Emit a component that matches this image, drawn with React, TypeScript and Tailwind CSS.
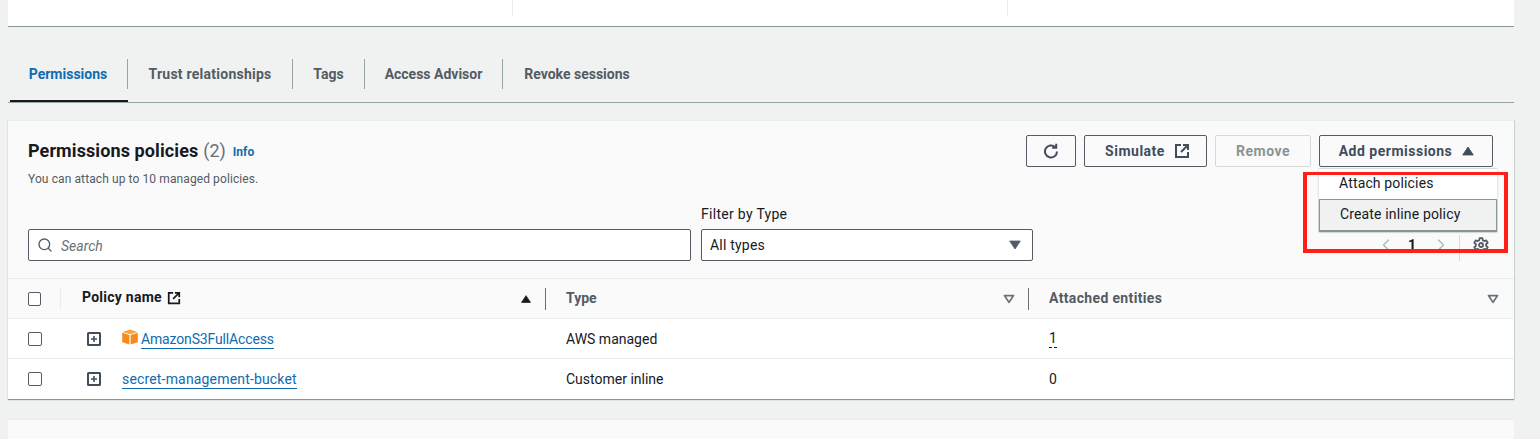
import { ChevronLeft, ChevronRight, Search } from "lucide-react";

const font = "font-['Roboto',sans-serif]";

function ExternalIcon({ className }: { className?: string }) {
  return (
    <svg viewBox="0 0 16 16" fill="none" stroke="currentColor" strokeWidth="2" className={className}>
      <path d="M7 2H2v12h12V9" />
      <path d="M9 2h5v5M14 2 7 9" />
    </svg>
  );
}

function RefreshIcon({ className }: { className?: string }) {
  return (
    <svg viewBox="0 0 16 16" fill="none" stroke="currentColor" strokeWidth="2" className={className}>
      <path d="M14 8.5a6 6 0 1 1-1.9-4.4" />
      <path d="M13.2 .8v4h-4" />
    </svg>
  );
}

function GearIcon({ className }: { className?: string }) {
  return (
    <svg viewBox="0 0 16 16" fill="none" stroke="currentColor" strokeWidth="1.8" strokeLinejoin="round" className={className}>
      <path d="M6.6 1.2h2.8l.4 2 1.5.9 2-.7 1.4 2.4-1.6 1.4v1.6l1.6 1.4-1.4 2.4-2-.7-1.5.9-.4 2H6.6l-.4-2-1.5-.9-2 .7-1.4-2.4 1.6-1.4V7.2L1.3 5.8l1.4-2.4 2 .7 1.5-.9Z" />
      <circle cx="8" cy="8" r="2" />
    </svg>
  );
}

function Triangle({ up, hollow, className }: { up?: boolean; hollow?: boolean; className?: string }) {
  const d = up ? "M8 3.5 14 12.5H2Z" : "M2 3.5H14L8 12.5Z";
  return (
    <svg viewBox="0 0 16 16" className={className}>
      <path
        d={d}
        fill={hollow ? "none" : "currentColor"}
        stroke="currentColor"
        strokeWidth={hollow ? 2.4 : 1}
        strokeLinejoin="round"
      />
    </svg>
  );
}

function Checkbox() {
  return <span className="block h-[14px] w-[14px] rounded-[2px] border border-[#545b64] bg-white" />;
}

function ExpandIcon() {
  return (
    <svg viewBox="0 0 14 14" fill="none" stroke="#414d5c" className="h-[14px] w-[14px]">
      <rect x="1" y="1" width="12" height="12" strokeWidth="2" rx="0.5" />
      <path d="M7 4v6M4 7h6" strokeWidth="1.6" />
    </svg>
  );
}

function Cube() {
  return (
    <svg viewBox="0 0 16 16" className="h-4 w-4 shrink-0">
      <path d="M8 .6 15.6 3 8 5.2.4 3Z" fill="#f9a23b" />
      <path d="M.2 3.7 7.4 6v9.6L.2 13.2Z" fill="#f58a1f" />
      <path d="M15.8 3.7 8.6 6v9.6l7.2-2.4Z" fill="#f58a1f" />
    </svg>
  );
}

function Button({ children, disabled, className }: { children: React.ReactNode; disabled?: boolean; className?: string }) {
  return (
    <div
      className={`flex h-8 items-center justify-center rounded-[2px] border text-[14px] font-bold tracking-[0.5px] ${
        disabled ? "border-[#d5dbdb] text-[#879596]" : "border-[#545b64] text-[#414d5c]"
      } ${className ?? ""}`}
    >
      {children}
    </div>
  );
}

export default function App() {
  return (
    <div className={`relative h-[439px] w-[1540px] overflow-hidden bg-[#f0f2f1] ${font}`}>
      {/* summary card, cut off by the top of the shot */}
      <div className="ml-2 flex h-[27px] w-[1506px] border-b border-[#879596] bg-white">
        <div className="h-4 w-[505px] border-r border-[#eaeded]" />
        <div className="h-4 w-[495px] border-r border-[#eaeded]" />
      </div>

      {/* tabs */}
      <div className="mx-2 mt-8 flex h-11 w-[1506px] items-start border-b border-[#95a5a6] text-[14px] font-bold text-[#545b64]">
        <div className="ml-[2px] flex h-[43px] w-[118px] items-start border-b-2 border-[#16191f]">
          <span className="flex h-[30px] w-[118px] items-center justify-center border-r border-[#95a5a6] pr-[1px] text-[#0f6cb1]">
            Permissions
          </span>
        </div>
        <div className="flex h-[30px] w-[165px] items-center justify-center border-r border-[#95a5a6] tracking-[0.25px]">Trust relationships</div>
        <div className="flex h-[30px] w-[72px] items-center justify-center border-r border-[#95a5a6]">Tags</div>
        <div className="flex h-[30px] w-[138px] items-center justify-center border-r border-[#95a5a6]">Access Advisor</div>
        <div className="flex h-[30px] w-[148px] items-center justify-center">Revoke sessions</div>
      </div>

      {/* permissions policies panel */}
      <div className="ml-2 mt-[17px] w-[1506px] border-t border-[#eaeded] bg-[#fafafa] shadow-[0_1px_1px_#879596,1px_0_0_#d5dbdb]">
        <div className="flex h-[158px] flex-col border-b border-[#eaeded] pl-5 pr-[21px] pt-[14px]">
          <div className="flex items-start justify-between">
            <div>
              <div className="flex h-[30px] items-center">
                <span className="text-[18px] font-bold tracking-[0.1px] text-[#16191f]">Permissions policies</span>
                <span className="ml-[5px] text-[18px] text-[#687078]">(2)</span>
                <span className="ml-[7px] translate-y-[2px] text-[12px] font-bold text-[#0f6cb1]">Info</span>
              </div>
              <div className="mt-[5px] text-[12px] tracking-[0.1px] text-[#545b64]">You can attach up to 10 managed policies.</div>
            </div>
            <div className="flex gap-2">
              <Button className="w-[50px]">
                <RefreshIcon className="h-4 w-4" />
              </Button>
              <Button className="w-[123px] gap-[9px] pl-1">
                Simulate
                <ExternalIcon className="h-4 w-4" />
              </Button>
              <Button disabled className="w-[96px]">
                Remove
              </Button>
              <Button className="w-[174px] gap-[9px] pl-[2px]">
                Add permissions
                <Triangle up className="h-[14px] w-[14px]" />
              </Button>
            </div>
          </div>

          <div className="mt-[16px] flex items-end">
            <div className="flex h-8 w-[663px] items-center rounded-[2px] border border-[#545b64] bg-white px-[8px]">
              <Search size={16} strokeWidth={2} className="text-[#545b64]" />
              <span className="ml-[8px] translate-y-[1px] text-[14px] italic text-[#687078]">Search</span>
            </div>
            <div className="ml-[10px] w-[332px]">
              <div className="mb-[4px] text-[14px] tracking-[0.3px] text-[#16191f]">Filter by Type</div>
              <div className="flex h-8 items-center justify-between rounded-[2px] border border-[#545b64] bg-white pl-[8px] pr-[10px] text-[14px] tracking-[0.2px] text-[#16191f]">
                All types
                <Triangle className="h-[14px] w-[14px] text-[#545b64]" />
              </div>
            </div>
            <div className="ml-auto flex h-[26px] w-[134px] items-start text-[#aab7b8]">
              <ChevronLeft size={20} className="ml-[17px]" strokeWidth={1.6} />
              <span className="ml-[9px] w-[14px] text-center text-[14px] font-bold leading-5 text-[#16191f]">1</span>
              <ChevronRight size={20} className="ml-[12px]" strokeWidth={1.6} />
              <div className="ml-[8px] h-[26px] w-px bg-[#d5dbdb]" />
              <GearIcon className="ml-[13px] mt-[2px] h-4 w-4 text-[#545b64]" />
            </div>
          </div>
        </div>

        {/* table */}
        <div className="grid grid-cols-[53px_485px_483px_1fr] text-[14px]">
          <div className="flex h-[40px] items-center border-b border-[#eaeded] pl-5">
            <Checkbox />
            <div className="ml-[19px] h-[22px] w-px bg-[#eaeded]" />
          </div>
          <div className="flex h-[40px] items-center border-b border-[#eaeded] pl-[21px] font-bold text-[#16191f]">
            <span className="-translate-y-[1px] tracking-[0.25px]">Policy name</span>
            <ExternalIcon className="ml-[5px] h-[14px] w-[14px] -translate-y-[1px]" />
            <Triangle up className="ml-auto mr-[13px] h-[12px] w-[12px]" />
            <div className="h-[22px] w-px bg-[#687078]" />
          </div>
          <div className="flex h-[40px] items-center border-b border-[#eaeded] pl-5 font-bold text-[#545b64]">
            Type
            <Triangle hollow className="ml-auto mr-[13px] h-[12px] w-[12px] text-[#687078]" />
            <div className="h-[22px] w-px bg-[#687078]" />
          </div>
          <div className="flex h-[40px] items-center border-b border-[#eaeded] pl-5 pr-[15px] font-bold text-[#545b64]">
            <span className="tracking-[0.35px]">Attached entities</span>
            <Triangle hollow className="ml-auto h-[12px] w-[12px] text-[#687078]" />
          </div>

          <div className="flex h-[40px] items-center border-b border-[#eaeded] bg-white pl-5">
            <Checkbox />
          </div>
          <div className="flex h-[40px] items-center border-b border-[#eaeded] bg-white pl-[26px]">
            <ExpandIcon />
            <span className="ml-[21px] -translate-y-[2px]">
              <Cube />
            </span>
            <span className="ml-[3px] translate-y-[1px] border-b border-[#0f6cb1] leading-[17px] tracking-[-0.15px] text-[#0f6cb1]">AmazonS3FullAccess</span>
          </div>
          <div className="flex h-[40px] items-center border-b border-[#eaeded] bg-white pl-5 pt-[1px] text-[#16191f]">AWS managed</div>
          <div className="flex h-[40px] items-center border-b border-[#eaeded] bg-white pl-5 text-[#16191f]">
            <span className="border-b border-dashed border-[#16191f] leading-[17px]">1</span>
          </div>

          <div className="flex h-[40px] items-center bg-white pl-5">
            <Checkbox />
          </div>
          <div className="flex h-[40px] items-center bg-white pl-[26px]">
            <ExpandIcon />
            <span className="ml-[21px] translate-y-[1px] border-b border-[#0f6cb1] leading-[17px] tracking-[0.17px] text-[#0f6cb1]">secret-management-bucket</span>
          </div>
          <div className="flex h-[40px] items-center bg-white pl-5 text-[#16191f]">Customer inline</div>
          <div className="flex h-[40px] items-center bg-white pl-5 text-[#16191f]">0</div>
        </div>
      </div>

      {/* next panel, cut off at the bottom */}
      <div className="ml-2 mt-[20px] h-8 w-[1506px] border-t border-[#eaeded] bg-[#fafafa]" />

      {/* open dropdown menu */}
      <div className="absolute left-[1319px] top-[168px] w-[178px] border-t border-[#d5dbdb] bg-white text-[14px] tracking-[0.15px] text-[#16191f] shadow-[0_1px_2px_rgba(0,0,0,0.25)]">
        <div className="flex h-[30px] items-center pb-[2px] pl-[20px]">Attach policies</div>
        <div className="flex h-8 items-center border border-[#879596] bg-[#f0f2f1] pb-[2px] pl-[20px] shadow-[0_1px_1px_#879596]">Create inline policy</div>
      </div>

      {/* red highlight added over the screenshot */}
      <div className="absolute left-[1303px] top-[172px] h-[81px] w-[205px] border-[4px] border-t-[3px] border-[#ff1f17]" />
    </div>
  );
}
